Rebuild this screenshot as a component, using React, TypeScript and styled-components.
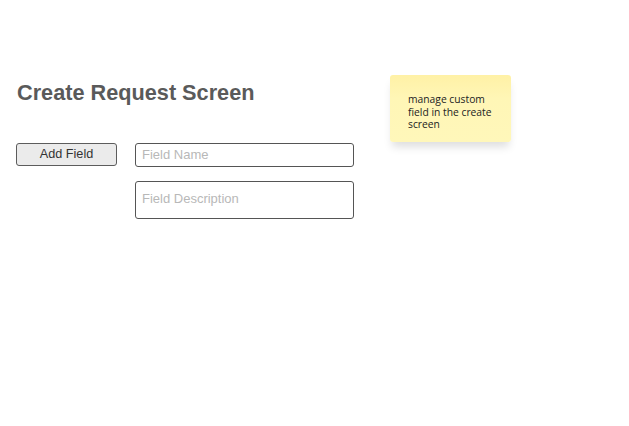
import React from "react";
import styled, { createGlobalStyle } from "styled-components";

const Global = createGlobalStyle`
  html, body { margin: 0; padding: 0; background: #ffffff; }
  body { font-family: "Liberation Sans", Arial, sans-serif; }
`;

const Page = styled.div`
  width: 629px;
  height: 426px;
  box-sizing: border-box;
  padding: 75px 0 0 16px;
  display: flex;
  align-items: flex-start;
  gap: 36px;
`;

const Main = styled.div`
  width: 338px;
  display: flex;
  flex-direction: column;
`;

const Title = styled.h1`
  margin: 7px 0 0 1px;
  font-family: "Liberation Sans", Arial, sans-serif;
  font-size: 21.7px;
  line-height: 22px;
  font-weight: 700;
  color: #5a5a5a;
`;

const Form = styled.div`
  margin-top: 39px;
  display: grid;
  grid-template-columns: 101px 219px;
  column-gap: 18px;
  row-gap: 14px;
  align-items: start;
`;

const Button = styled.button`
  height: 23px;
  box-sizing: border-box;
  border: 1px solid #5c5c5c;
  border-radius: 3px;
  background: #ebebeb;
  color: #333333;
  font-family: "Liberation Sans", Arial, sans-serif;
  font-size: 12.7px;
  padding: 0 0 2px;
`;

const Input = styled.input<{ $tall?: boolean }>`
  grid-column: 2;
  height: ${(p) => (p.$tall ? "38px" : "24px")};
  box-sizing: border-box;
  border: 1px solid #555555;
  border-radius: 3px;
  padding: ${(p) => (p.$tall ? "0 6px 3px" : "0 6px 1px")};
  font-family: "Liberation Sans", Arial, sans-serif;
  font-size: 13px;
  color: #333;
  background: #ffffff;
  outline: none;
  &::placeholder { color: #b8b8b8; }
`;

const Sticky = styled.div`
  width: 121px;
  height: 67px;
  box-sizing: border-box;
  padding: 18px 12px 0 18px;
  border-radius: 3px;
  background: linear-gradient(180deg, #fff1a6 0%, #fff6b6 35%, #fff7ba 100%);
  box-shadow: 0 7px 8px -2px rgba(0, 0, 0, 0.13);
  font-family: "Open Sans", "Noto Sans", sans-serif;
  font-size: 10.3px;
  line-height: 12.5px;
  color: #222222;
`;

export default function App() {
  return (
    <>
      <Global />
      <Page>
        <Main>
          <Title>Create Request Screen</Title>
          <Form>
            <Button>Add Field</Button>
            <Input placeholder="Field Name" />
            <Input $tall placeholder="Field Description" />
          </Form>
        </Main>
        <Sticky>manage custom field in the create screen</Sticky>
      </Page>
    </>
  );
}
